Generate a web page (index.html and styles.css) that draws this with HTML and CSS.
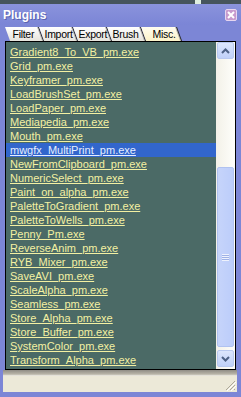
FILE: index.html
```html
<!DOCTYPE html>
<html lang="en">

<head>
    <meta charset="UTF-8">
    <meta name="viewport" content="width=device-width, initial-scale=1.0">
    <title>Plugins</title>
    <link rel="stylesheet" href="styles.css">
</head>

<body>
    <div class="window">
        <div class="behind"><span class="spot"></span></div>
        <div class="titlebar">
            <span class="title">Plugins</span>
            <span class="close">
                <svg width="8" height="8" viewBox="0 0 8 8">
                    <path d="M1 1 L7 7 M7 1 L1 7" stroke="#fff" stroke-width="2" />
                </svg>
            </span>
        </div>
        <div class="tabs">
            <div class="tab filter"><span>Filter</span></div>
            <div class="tab"><span>Import</span></div>
            <div class="tab"><span>Export</span></div>
            <div class="tab"><span>Brush</span></div>
            <div class="tab active"><span>Misc.</span></div>
        </div>
        <div class="listbox">
            <ul class="items">
                <li><a href="#">Gradient8_To_VB_pm.exe</a></li>
                <li><a href="#">Grid_pm.exe</a></li>
                <li><a href="#">Keyframer_pm.exe</a></li>
                <li><a href="#">LoadBrushSet_pm.exe</a></li>
                <li><a href="#">LoadPaper_pm.exe</a></li>
                <li><a href="#">Mediapedia_pm.exe</a></li>
                <li><a href="#">Mouth_pm.exe</a></li>
                <li class="selected"><a href="#">mwgfx_MultiPrint_pm.exe</a></li>
                <li><a href="#">NewFromClipboard_pm.exe</a></li>
                <li><a href="#">NumericSelect_pm.exe</a></li>
                <li><a href="#">Paint_on_alpha_pm.exe</a></li>
                <li><a href="#">PaletteToGradient_pm.exe</a></li>
                <li><a href="#">PaletteToWells_pm.exe</a></li>
                <li><a href="#">Penny_Pm.exe</a></li>
                <li><a href="#">ReverseAnim_pm.exe</a></li>
                <li><a href="#">RYB_Mixer_pm.exe</a></li>
                <li><a href="#">SaveAVI_pm.exe</a></li>
                <li><a href="#">ScaleAlpha_pm.exe</a></li>
                <li><a href="#">Seamless_pm.exe</a></li>
                <li><a href="#">Store_Alpha_pm.exe</a></li>
                <li><a href="#">Store_Buffer_pm.exe</a></li>
                <li><a href="#">SystemColor_pm.exe</a></li>
                <li><a href="#">Transform_Alpha_pm.exe</a></li>
            </ul>
            <div class="scrollbar">
                <div class="sb-btn">
                    <svg width="9" height="6" viewBox="0 0 9 6">
                        <path d="M1 5 L4.5 1.5 L8 5" fill="none" stroke="#4d6185" stroke-width="2" />
                    </svg>
                </div>
                <div class="sb-track">
                    <div class="sb-thumb"><span class="sb-grip"></span></div>
                </div>
                <div class="sb-btn">
                    <svg width="9" height="6" viewBox="0 0 9 6">
                        <path d="M1 1 L4.5 4.5 L8 1" fill="none" stroke="#4d6185" stroke-width="2" />
                    </svg>
                </div>
            </div>
        </div>
        <div class="divider"></div>
        <div class="statusbar">
            <svg class="resize" width="11" height="11" viewBox="0 0 11 11">
                <path d="M10 1 L1 10 M10 5 L5 10 M10 9 L9 10" stroke="#aca899" stroke-width="1" />
                <path d="M11 2 L2 11 M11 6 L6 11" stroke="#fff" stroke-width="1" />
            </svg>
        </div>
    </div>
</body>

</html>
```

FILE: styles.css
```css
body {
    margin: 0;
    font-family: "Liberation Sans", Arial, sans-serif;
    font-size: 11px;
}

.window {
    width: 241px;
    height: 397px;
    background: #7c86d6;
    display: flex;
    flex-direction: column;
    overflow: hidden;
}

.behind {
    height: 4px;
    background: #46555c;
    display: flex;
    justify-content: flex-end;
    padding-right: 40px;
}

.behind .spot {
    width: 6px;
    background: #dfeee0;
}

.titlebar {
    height: 21px;
    background: linear-gradient(to bottom, #8a93dc, #7b85d6);
    display: flex;
    align-items: center;
    justify-content: space-between;
    padding: 0 4px 0 3px;
}

.title {
    color: #ffffff;
    font-weight: bold;
    font-size: 12px;
    text-shadow: 1px 1px 0 #5a64b0;
}

.close {
    width: 12px;
    height: 12px;
    background: #c79bce;
    border: 1px solid #e6d6f0;
    border-radius: 2px;
    display: flex;
    align-items: center;
    justify-content: center;
    box-sizing: border-box;
}

.tabs {
    height: 14px;
    margin: 2px 0 0 5px;
    display: flex;
}

.tab {
    width: 34px;
    height: 14px;
    box-sizing: border-box;
    background: linear-gradient(to bottom, #ffffff, #e6e4dc);
    border-right: 1px solid #2a2a2a;
    box-shadow: inset -1px 0 0 #b8b6ac;
    transform: skewX(20deg);
    transform-origin: top left;
    display: flex;
    align-items: center;
    padding-left: 3px;
}

.tab.filter {
    padding-left: 5px;
}

.tab span {
    transform: skewX(-20deg);
    color: #000;
    font-size: 10.5px;
    line-height: 14px;
    letter-spacing: -0.3px;
}

.tab.active {
    width: 36px;
    padding-left: 9px;
    background: linear-gradient(to bottom, #fffdf0, #fcf3c8);
}

.listbox {
    height: 329px;
    margin: 0 5px 0 5px;
    border: 1px solid #000;
    box-sizing: border-box;
    background: #4b6a66;
    display: flex;
}

.items {
    flex: 1;
    list-style: none;
    margin: 0;
    padding: 3px 0 0 0;
    overflow: hidden;
}

.items li {
    height: 14px;
    line-height: 14px;
    padding-left: 4px;
    white-space: nowrap;
}

.items a {
    color: #f3f0a2;
}

.items li.selected {
    background: #3266cc;
}

.items li.selected a {
    color: #e6eeff;
}

.scrollbar {
    width: 19px;
    background: linear-gradient(to right, #f3f1e8, #fefefb);
    display: flex;
    flex-direction: column;
    padding: 0 1px 2px 1px;
    box-sizing: border-box;
}

.sb-btn {
    height: 17px;
    background: linear-gradient(to bottom, #dce6fd, #c0d0f8);
    border: 1px solid #b9c9f0;
    border-radius: 2px;
    box-sizing: border-box;
    display: flex;
    align-items: center;
    justify-content: center;
}

.sb-track {
    flex: 1;
}

.sb-thumb {
    margin-top: 108px;
    height: 180px;
    background: linear-gradient(to right, #c6d4fa, #bccdfa);
    border: 1px solid #b0c2f0;
    border-radius: 2px;
    box-sizing: border-box;
    display: flex;
    align-items: center;
    justify-content: center;
}

.sb-grip {
    width: 7px;
    height: 7px;
    background: repeating-linear-gradient(to bottom, #eef2fd 0, #eef2fd 1px, #9fb2e6 1px, #9fb2e6 2px);
}

.divider {
    height: 6px;
    margin: 0 4px 0 3px;
    background: linear-gradient(to bottom, #8f8c84, #b9b5a8 70%, #f4f2ea);
}

.statusbar {
    height: 16px;
    margin: 0 4px 0 3px;
    background: #ece9d8;
    display: flex;
    justify-content: flex-end;
    align-items: flex-end;
}

.resize {
    margin: 0 1px 1px 0;
}
```
